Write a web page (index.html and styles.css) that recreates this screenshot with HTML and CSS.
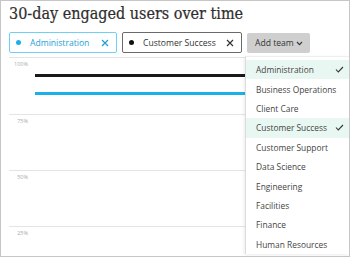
FILE: index.html
```html
<!DOCTYPE html>
<html>
<head>
<meta charset="utf-8">
<link rel="stylesheet" href="styles.css">
</head>
<body>
<div class="frame">
  <h1 class="title">30-day engaged users over time</h1>
  <div class="controls">
    <div class="chip chip-blue"><span class="dot"></span><span class="chip-label">Administration</span><svg class="x" width="8" height="8" viewBox="0 0 8 8"><path d="M1 1 L7 7 M7 1 L1 7" stroke="#1a9fd6" stroke-width="1.2"/></svg></div>
    <div class="chip chip-dark"><span class="dot"></span><span class="chip-label">Customer Success</span><svg class="x" width="8" height="8" viewBox="0 0 8 8"><path d="M1 1 L7 7 M7 1 L1 7" stroke="#333" stroke-width="1.2"/></svg></div>
    <button class="add-btn">Add team<svg class="chev" width="7" height="5" viewBox="0 0 7 5"><path d="M1 1 L3.5 3.6 L6 1" fill="none" stroke="#333" stroke-width="1.1"/></svg></button>
  </div>
  <ul class="menu">
    <li class="sel">Administration<svg class="check" width="9" height="7" viewBox="0 0 9 7"><path d="M1 3.5 L3.3 6 L8 1" fill="none" stroke="#333" stroke-width="1.1"/></svg></li>
    <li>Business Operations</li>
    <li>Client Care</li>
    <li class="sel">Customer Success<svg class="check" width="9" height="7" viewBox="0 0 9 7"><path d="M1 3.5 L3.3 6 L8 1" fill="none" stroke="#333" stroke-width="1.1"/></svg></li>
    <li>Customer Support</li>
    <li>Data Science</li>
    <li>Engineering</li>
    <li>Facilities</li>
    <li>Finance</li>
    <li>Human Resources</li>
  </ul>
  <div class="chart">
    <div class="band band-top">
      <span class="tick">100%</span>
      <div class="series">
        <div class="line line-dark"></div>
        <div class="line line-blue"></div>
      </div>
    </div>
    <div class="band"><span class="tick">75%</span></div>
    <div class="band"><span class="tick">50%</span></div>
    <div class="band"><span class="tick">25%</span></div>
  </div>
</div>
</body>
</html>
```
FILE: styles.css
```css
* { box-sizing: border-box; }
html, body { margin: 0; padding: 0; background: #fff; }
.frame {
  width: 350px;
  height: 257px;
  border: 1px solid #c6c6c6;
  overflow: hidden;
  position: relative;
  font-family: "Open Sans", "Liberation Sans", sans-serif;
  color: #333;
}
.title {
  margin: 0;
  padding: 2px 0 0 8px;
  font-family: "DejaVu Serif", serif;
  font-stretch: condensed;
  font-weight: normal;
  font-size: 16px;
  line-height: 22px;
  color: #2e2e2e;
  -webkit-text-stroke: 0.2px #2e2e2e;
}
.controls {
  display: flex;
  align-items: flex-start;
  gap: 5px;
  padding: 7px 0 0 8px;
}
.chip {
  display: flex;
  align-items: center;
  height: 21px;
  border: 1px solid #666;
  border-radius: 2px;
  padding: 0 7px 0 6px;
  font-size: 8.6px;
  white-space: nowrap;
}
.chip-blue { border-color: #6fd0f4; color: #1a9fd6; width: 108px; }
.chip-dark { border-color: #6a6a6a; color: #333; width: 120px; }
.dot {
  width: 5px;
  height: 5px;
  border-radius: 50%;
  margin-right: 9px;
  flex: none;
}
.chip-blue .dot { background: #1ab1ea; }
.chip-dark .dot { background: #111; }
.chip-label { flex: 1; }
.x { flex: none; }
.add-btn {
  display: flex;
  align-items: center;
  height: 20px;
  margin-top: 1px;
  border: none;
  border-radius: 2px;
  background: #cfcfcf;
  padding: 0 7px 0 8px;
  white-space: nowrap;
  font-family: "Open Sans", "Liberation Sans", sans-serif;
  font-size: 8.6px;
  color: #333;
}
.chev { margin-left: 2px; margin-top: 1px; flex: none; }
.menu {
  position: absolute;
  top: 55px;
  left: 244px;
  right: 0;
  margin: 0;
  padding: 3px 0 0 0;
  list-style: none;
  background: #fff;
  border-left: 1px solid #dcdcdc;
  border-top: 1px solid #eee;
  box-shadow: -1px 1px 3px rgba(0,0,0,0.08);
  z-index: 2;
}
.menu li {
  display: flex;
  align-items: center;
  justify-content: space-between;
  height: 19.4px;
  padding: 0 5px 0 10px;
  font-size: 8.4px;
  color: #444;
  white-space: nowrap;
}
.menu li.sel { background: #e8f7f1; }
.chart {
  margin: 4px 8px 0 8px;
}
.band {
  height: 56px;
  border-top: 1px solid #e4e4e4;
}
.band-top { height: 57px; }
.tick {
  display: block;
  width: 19px;
  text-align: right;
  font-size: 5.5px;
  color: #aaa;
  padding-top: 2px;
}
.series { margin-left: 26px; padding-top: 6px; }
.line { height: 3px; }
.line-dark { background: #1a1a1a; }
.line-blue { background: #1ab1ea; margin-top: 15px; }
```
